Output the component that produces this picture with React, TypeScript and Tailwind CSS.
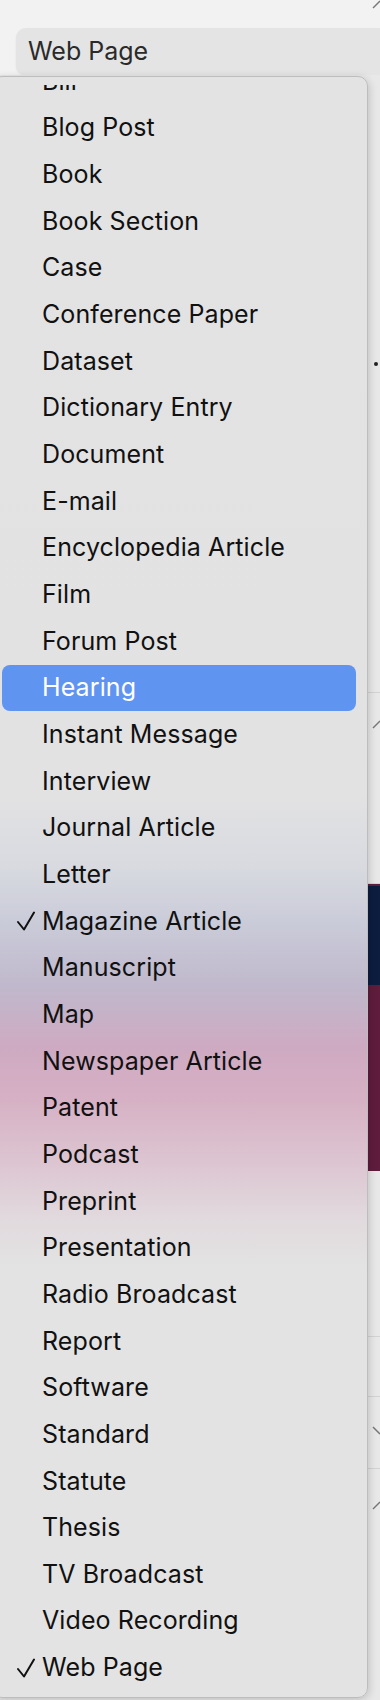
import React from "react";

const ITEMS = [
  "Bill",
  "Blog Post",
  "Book",
  "Book Section",
  "Case",
  "Conference Paper",
  "Dataset",
  "Dictionary Entry",
  "Document",
  "E-mail",
  "Encyclopedia Article",
  "Film",
  "Forum Post",
  "Hearing",
  "Instant Message",
  "Interview",
  "Journal Article",
  "Letter",
  "Magazine Article",
  "Manuscript",
  "Map",
  "Newspaper Article",
  "Patent",
  "Podcast",
  "Preprint",
  "Presentation",
  "Radio Broadcast",
  "Report",
  "Software",
  "Standard",
  "Statute",
  "Thesis",
  "TV Broadcast",
  "Video Recording",
  "Web Page",
];

const CHECKED = ["Magazine Article", "Web Page"];
const ACTIVE = "Hearing";

const FONT = "font-['Inter','Noto_Sans',sans-serif]";

function Check() {
  return (
    <svg width="18" height="20" viewBox="0 0 18 20" className="shrink-0">
      <polyline
        points="1,11 7,18.5 17,1.5"
        fill="none"
        stroke="#111"
        strokeWidth="2"
        strokeLinecap="round"
        strokeLinejoin="round"
      />
    </svg>
  );
}

// tiny slice of a chevron peeking out at the right edge
function Tick({ dir }: { dir: "up" | "down" }) {
  return (
    <svg width="8" height="9" viewBox="0 0 8 9">
      {dir === "up" ? (
        <line x1="1" y1="8" x2="8" y2="1" stroke="#777" strokeWidth="1.5" />
      ) : (
        <line x1="1" y1="1" x2="8" y2="8" stroke="#777" strokeWidth="1.5" />
      )}
    </svg>
  );
}

function MenuItem({ label }: { label: string }) {
  const active = label === ACTIVE;
  return (
    <div
      className={`h-[46.67px] shrink-0 flex items-center rounded-[8px] ${
        active ? "bg-[#6094f1] text-white" : "text-[#111]"
      }`}
    >
      <div className="w-[40px] pl-[15px] flex items-center">
        {CHECKED.includes(label) && <Check />}
      </div>
      <span className="text-[25px] leading-none tracking-[0.1px]">{label}</span>
    </div>
  );
}

export default function App() {
  return (
    <div
      className={`relative w-[380px] h-[1700px] overflow-hidden bg-[#e8e8e8] ${FONT}`}
    >
      {/* window content behind the popup */}
      <div className="flex flex-col">
        <div className="h-[28px] bg-[#f2f2f2] flex justify-end items-start">
          <Tick dir="up" />
        </div>
        <div className="h-[47px] bg-[#f2f2f2] pl-4">
          <div className="h-full rounded-l-[10px] bg-[#e4e4e4] flex items-center pl-3 shadow-[0_1px_2px_rgba(0,0,0,0.08)]">
            <span className="text-[25px] leading-none text-[#2a2a2a]">
              Web Page
            </span>
          </div>
        </div>
        <div className="h-[617px] bg-[#e8e8e8] flex flex-col items-end pt-[287px] pr-[2px]">
          <div className="w-[4px] h-[4px] rounded-full bg-[#222]" />
        </div>
        <div className="h-[191px] border-t border-[#d3d3d3] bg-[#e8e8e8] flex justify-end pt-[27px]">
          <div className="self-start">
            <Tick dir="up" />
          </div>
        </div>
        <div className="h-[3px] border-t border-[#d3d3d3] bg-[#5f1c3d]" />
        <div className="h-[99px] bg-[#0d1d40]" />
        <div className="h-[186px] bg-[#5f1c3d]" />
        <div className="h-[165px] bg-[#e8e8e8]" />
        <div className="h-[60px] border-t border-[#d3d3d3] bg-[#e8e8e8]" />
        <div className="h-[72px] border-t border-[#d3d3d3] bg-[#e8e8e8] flex justify-end pt-[29px]">
          <div className="self-start">
            <Tick dir="down" />
          </div>
        </div>
        <div className="h-[230px] border-t border-[#d3d3d3] bg-[#e8e8e8] flex justify-end pt-[32px]">
          <div className="self-start">
            <Tick dir="up" />
          </div>
        </div>
      </div>

      {/* popup menu */}
      <div className="absolute left-[-8px] top-[76px] w-[376px] h-[1622px] rounded-[10px] border border-[#bdbdbd] shadow-[1px_2px_8px_rgba(0,0,0,0.18)] bg-[linear-gradient(180deg,#e3e3e3_0px,#e2e2e3_720px,#d8dae0_790px,#c9cad8_850px,#c0b8cc_910px,#ceaac2_970px,#d6b0c4_1020px,#dcc3d0_1080px,#e1d9dd_1140px,#e3e3e3_1190px)] overflow-hidden">
        <div className="mt-[8px] h-[1608px] overflow-hidden">
          <div className="flex flex-col -mt-[27px] pl-[9px] pr-[11px]">
            {ITEMS.map((item) => (
              <MenuItem key={item} label={item} />
            ))}
          </div>
        </div>
      </div>
    </div>
  );
}
